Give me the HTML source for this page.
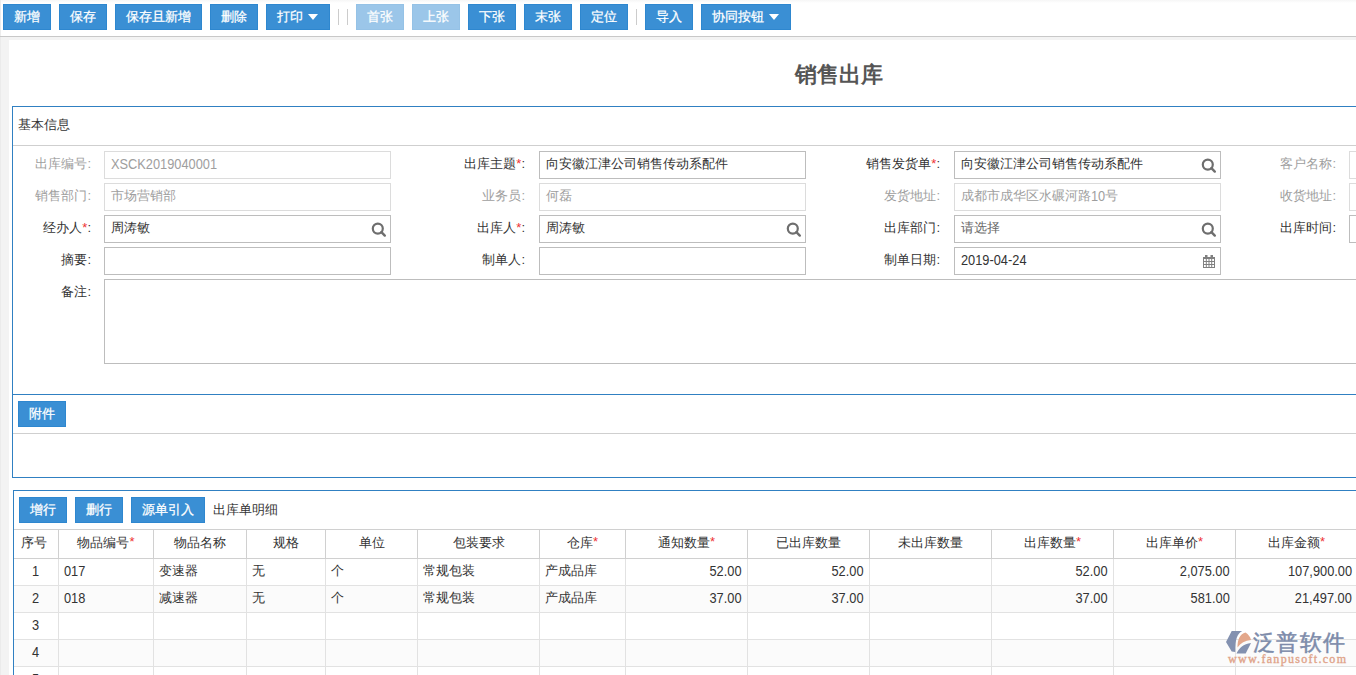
<!DOCTYPE html>
<html><head><meta charset="utf-8">
<style>
*{box-sizing:border-box;margin:0;padding:0}
html,body{width:1356px;height:675px;overflow:hidden;background:#f3f3f3;font-family:"Liberation Sans",sans-serif;font-size:13px;color:#333}
.abs{position:absolute}
#tb{position:absolute;left:0;top:0;width:1356px;height:37px;background:linear-gradient(#f6f6f6,#fff 3px);border-bottom:1px solid #c8c8c8;box-shadow:inset 1px 0 #ececec}
.btn{position:absolute;top:4px;height:26px;background:#3a8fd4;border:1px solid #2e87cf;color:#fff;-webkit-text-stroke:0.25px #fff;font-size:13px;line-height:24px;text-align:center;white-space:nowrap}
.btn.dis{opacity:.5}
.sep{position:absolute;top:9px;width:1px;height:16px;background:#ccc}
.caret{display:inline-block;width:0;height:0;border-left:5px solid transparent;border-right:5px solid transparent;border-top:6px solid #fff;vertical-align:middle;margin-left:5px;position:relative;top:-1px}
#panel{position:absolute;left:9px;top:40px;width:1660px;height:700px;background:#fff}
.fs{position:absolute;border:1px solid #3080c2;background:#fff}
.lbl{position:absolute;text-align:right;white-space:nowrap;line-height:26px;height:27px}
.lbl.g{color:#9e9e9e}
.req{color:#e33}
.cell .req{position:relative;top:-1px}
.inp{position:absolute;height:28px;border:1px solid #bdbdbd;background:#fff;line-height:24px;padding-left:6px;white-space:nowrap;overflow:hidden}
.inp.d{border-color:#dcdcdc;color:#9e9e9e}
.ic{position:absolute;right:3px;top:6px}
.n{display:inline-block;transform:translateY(1px) scale(0.985,1.1);transform-origin:0 62%}
.cell.r .n{transform-origin:100% 62%}
.inp .n{transform:translateY(1px) scale(0.985,1.1)}
.hl{position:absolute;height:1px;background:#cfcfcf}
.cell{position:absolute;white-space:nowrap;overflow:hidden;padding:0 6px}
.cell.c{text-align:center}.cell.r{text-align:right;padding-right:5px}.cell.l{text-align:left;padding-left:5px}
</style></head><body>
<div id="tb">
  <div class="btn" style="left:3px;width:48px">新增</div>
  <div class="btn" style="left:59px;width:48px">保存</div>
  <div class="btn" style="left:115px;width:87px">保存且新增</div>
  <div class="btn" style="left:210px;width:48px">删除</div>
  <div class="btn" style="left:266px;width:64px;padding-right:2px">打印<span class="caret"></span></div>
  <div class="sep" style="left:338px"></div>
  <div class="sep" style="left:347px"></div>
  <div class="btn dis" style="left:356px;width:48px">首张</div>
  <div class="btn dis" style="left:412px;width:48px">上张</div>
  <div class="btn" style="left:468px;width:48px">下张</div>
  <div class="btn" style="left:524px;width:48px">末张</div>
  <div class="btn" style="left:580px;width:48px">定位</div>
  <div class="sep" style="left:636px"></div>
  <div class="btn" style="left:645px;width:48px">导入</div>
  <div class="btn" style="left:701px;width:90px;padding-right:2px">协同按钮<span class="caret"></span></div>
</div>
<div id="panel"></div>
<div class="abs" style="left:0;top:37px;width:1px;height:638px;background:#ebebeb"></div>
<div class="abs" style="left:795px;top:60px;font-size:22px;font-weight:bold;color:#555;line-height:30px">销售出库</div>

<!-- fieldset 1 -->
<div class="fs" style="left:12px;top:106px;width:1700px;height:372px">
</div>
<div class="abs" style="left:18px;top:115px;line-height:20px">基本信息</div>
<div class="hl" style="left:13px;top:145px;width:1343px"></div>

<div id="form">
<div class="lbl g" style="left:-109px;top:151px;width:200px">出库编号:</div>
<div class="inp d" style="left:104px;top:151px;width:287px"><span class="n">XSCK2019040001</span></div>
<div class="lbl" style="left:325px;top:151px;width:200px">出库主题<span class="req">*</span>:</div>
<div class="inp" style="left:539px;top:151px;width:267px">向安徽江津公司销售传动系配件</div>
<div class="lbl" style="left:740px;top:151px;width:200px">销售发货单<span class="req">*</span>:</div>
<div class="inp" style="left:954px;top:151px;width:267px">向安徽江津公司销售传动系配件<svg class="ic" width="16" height="16" viewBox="0 0 16 16"><circle cx="6.8" cy="6.6" r="5" fill="none" stroke="#6e6e6e" stroke-width="2.2"/><line x1="10.4" y1="10.2" x2="13.8" y2="13.6" stroke="#6e6e6e" stroke-width="2.4" stroke-linecap="round"/></svg></div>
<div class="lbl g" style="left:1136px;top:151px;width:200px">客户名称:</div>
<div class="inp d" style="left:1349px;top:151px;width:300px"></div>
<div class="lbl g" style="left:-109px;top:183px;width:200px">销售部门:</div>
<div class="inp d" style="left:104px;top:183px;width:287px">市场营销部</div>
<div class="lbl g" style="left:325px;top:183px;width:200px">业务员:</div>
<div class="inp d" style="left:539px;top:183px;width:267px">何磊</div>
<div class="lbl g" style="left:740px;top:183px;width:200px">发货地址:</div>
<div class="inp d" style="left:954px;top:183px;width:267px">成都市成华区水碾河路<span class="n">10</span>号</div>
<div class="lbl g" style="left:1136px;top:183px;width:200px">收货地址:</div>
<div class="inp d" style="left:1349px;top:183px;width:300px"></div>
<div class="lbl" style="left:-109px;top:215px;width:200px">经办人<span class="req">*</span>:</div>
<div class="inp" style="left:104px;top:215px;width:287px">周涛敏<svg class="ic" width="16" height="16" viewBox="0 0 16 16"><circle cx="6.8" cy="6.6" r="5" fill="none" stroke="#6e6e6e" stroke-width="2.2"/><line x1="10.4" y1="10.2" x2="13.8" y2="13.6" stroke="#6e6e6e" stroke-width="2.4" stroke-linecap="round"/></svg></div>
<div class="lbl" style="left:325px;top:215px;width:200px">出库人<span class="req">*</span>:</div>
<div class="inp" style="left:539px;top:215px;width:267px">周涛敏<svg class="ic" width="16" height="16" viewBox="0 0 16 16"><circle cx="6.8" cy="6.6" r="5" fill="none" stroke="#6e6e6e" stroke-width="2.2"/><line x1="10.4" y1="10.2" x2="13.8" y2="13.6" stroke="#6e6e6e" stroke-width="2.4" stroke-linecap="round"/></svg></div>
<div class="lbl" style="left:740px;top:215px;width:200px">出库部门:</div>
<div class="inp" style="left:954px;top:215px;width:267px;color:#666">请选择<svg class="ic" width="16" height="16" viewBox="0 0 16 16"><circle cx="6.8" cy="6.6" r="5" fill="none" stroke="#6e6e6e" stroke-width="2.2"/><line x1="10.4" y1="10.2" x2="13.8" y2="13.6" stroke="#6e6e6e" stroke-width="2.4" stroke-linecap="round"/></svg></div>
<div class="lbl" style="left:1136px;top:215px;width:200px">出库时间:</div>
<div class="inp" style="left:1349px;top:215px;width:300px"></div>
<div class="lbl" style="left:-109px;top:247px;width:200px">摘要:</div>
<div class="inp" style="left:104px;top:247px;width:287px"></div>
<div class="lbl" style="left:325px;top:247px;width:200px">制单人:</div>
<div class="inp" style="left:539px;top:247px;width:267px"></div>
<div class="lbl" style="left:740px;top:247px;width:200px">制单日期:</div>
<div class="inp" style="left:954px;top:247px;width:267px"><span class="n">2019-04-24</span><svg class="ic" width="16" height="16" viewBox="0 0 16 16"><g fill="none" stroke="#808080" stroke-width="1"><rect x="2.5" y="3.5" width="11" height="10"/><line x1="2.5" y1="7.5" x2="13.5" y2="7.5"/><line x1="2.5" y1="10.5" x2="13.5" y2="10.5"/><line x1="5.3" y1="4" x2="5.3" y2="13.5"/><line x1="8" y1="4" x2="8" y2="13.5"/><line x1="10.7" y1="4" x2="10.7" y2="13.5"/></g><rect x="2" y="3" width="12" height="2" fill="#808080"/><rect x="4" y="1" width="2.5" height="3" fill="#808080"/><rect x="9.5" y="1" width="2.5" height="3" fill="#808080"/></svg></div>
<div class="lbl" style="left:-109px;top:279px;width:200px">备注:</div>
<div class="inp" style="left:104px;top:279px;width:1400px;height:85px"></div>
</div>

<div class="abs" style="left:13px;top:394px;width:1343px;height:1px;background:#3080c2"></div>
<div class="btn" style="left:18px;top:401px;width:48px">附件</div>
<div class="hl" style="left:13px;top:433px;width:1343px"></div>

<!-- fieldset 2 -->
<div class="fs" style="left:13px;top:490px;width:1700px;height:300px"></div>
<div class="btn" style="left:19px;top:497px;width:48px">增行</div>
<div class="btn" style="left:75px;top:497px;width:48px">删行</div>
<div class="btn" style="left:131px;top:497px;width:74px">源单引入</div>
<div class="abs" style="left:213px;top:497px;line-height:26px">出库单明细</div>
<div id="grid">
<div class="abs" style="left:14px;top:586px;width:1342px;height:26px;background:#fbfbfb"></div>
<div class="abs" style="left:14px;top:640px;width:1342px;height:26px;background:#fbfbfb"></div>
<div class="abs" style="left:14px;top:529px;width:1342px;height:1px;background:#d0d0d0"></div>
<div class="abs" style="left:14px;top:558px;width:1342px;height:1px;background:#d0d0d0"></div>
<div class="abs" style="left:14px;top:585px;width:1342px;height:1px;background:#e2e2e2"></div>
<div class="abs" style="left:14px;top:612px;width:1342px;height:1px;background:#e2e2e2"></div>
<div class="abs" style="left:14px;top:639px;width:1342px;height:1px;background:#e2e2e2"></div>
<div class="abs" style="left:14px;top:666px;width:1342px;height:1px;background:#e2e2e2"></div>
<div class="abs" style="left:14px;top:693px;width:1342px;height:1px;background:#e2e2e2"></div>
<div class="abs" style="left:58px;top:530px;width:1px;height:28px;background:#d0d0d0"></div>
<div class="abs" style="left:58px;top:559px;width:1px;height:120px;background:#e2e2e2"></div>
<div class="abs" style="left:153px;top:530px;width:1px;height:28px;background:#d0d0d0"></div>
<div class="abs" style="left:153px;top:559px;width:1px;height:120px;background:#e2e2e2"></div>
<div class="abs" style="left:246px;top:530px;width:1px;height:28px;background:#d0d0d0"></div>
<div class="abs" style="left:246px;top:559px;width:1px;height:120px;background:#e2e2e2"></div>
<div class="abs" style="left:325px;top:530px;width:1px;height:28px;background:#d0d0d0"></div>
<div class="abs" style="left:325px;top:559px;width:1px;height:120px;background:#e2e2e2"></div>
<div class="abs" style="left:417px;top:530px;width:1px;height:28px;background:#d0d0d0"></div>
<div class="abs" style="left:417px;top:559px;width:1px;height:120px;background:#e2e2e2"></div>
<div class="abs" style="left:539px;top:530px;width:1px;height:28px;background:#d0d0d0"></div>
<div class="abs" style="left:539px;top:559px;width:1px;height:120px;background:#e2e2e2"></div>
<div class="abs" style="left:625px;top:530px;width:1px;height:28px;background:#d0d0d0"></div>
<div class="abs" style="left:625px;top:559px;width:1px;height:120px;background:#e2e2e2"></div>
<div class="abs" style="left:747px;top:530px;width:1px;height:28px;background:#d0d0d0"></div>
<div class="abs" style="left:747px;top:559px;width:1px;height:120px;background:#e2e2e2"></div>
<div class="abs" style="left:869px;top:530px;width:1px;height:28px;background:#d0d0d0"></div>
<div class="abs" style="left:869px;top:559px;width:1px;height:120px;background:#e2e2e2"></div>
<div class="abs" style="left:991px;top:530px;width:1px;height:28px;background:#d0d0d0"></div>
<div class="abs" style="left:991px;top:559px;width:1px;height:120px;background:#e2e2e2"></div>
<div class="abs" style="left:1113px;top:530px;width:1px;height:28px;background:#d0d0d0"></div>
<div class="abs" style="left:1113px;top:559px;width:1px;height:120px;background:#e2e2e2"></div>
<div class="abs" style="left:1235px;top:530px;width:1px;height:28px;background:#d0d0d0"></div>
<div class="abs" style="left:1235px;top:559px;width:1px;height:120px;background:#e2e2e2"></div>
<div class="cell c" style="left:14px;top:530px;width:44px;height:28px;line-height:26px;padding:0 10px 0 6px">序号</div>
<div class="cell c" style="left:59px;top:530px;width:94px;height:28px;line-height:26px">物品编号<span class=req>*</span></div>
<div class="cell c" style="left:154px;top:530px;width:92px;height:28px;line-height:26px">物品名称</div>
<div class="cell c" style="left:247px;top:530px;width:78px;height:28px;line-height:26px">规格</div>
<div class="cell c" style="left:326px;top:530px;width:91px;height:28px;line-height:26px">单位</div>
<div class="cell c" style="left:418px;top:530px;width:121px;height:28px;line-height:26px">包装要求</div>
<div class="cell c" style="left:540px;top:530px;width:85px;height:28px;line-height:26px">仓库<span class=req>*</span></div>
<div class="cell c" style="left:626px;top:530px;width:121px;height:28px;line-height:26px">通知数量<span class=req>*</span></div>
<div class="cell c" style="left:748px;top:530px;width:121px;height:28px;line-height:26px">已出库数量</div>
<div class="cell c" style="left:870px;top:530px;width:121px;height:28px;line-height:26px">未出库数量</div>
<div class="cell c" style="left:992px;top:530px;width:121px;height:28px;line-height:26px">出库数量<span class=req>*</span></div>
<div class="cell c" style="left:1114px;top:530px;width:121px;height:28px;line-height:26px">出库单价<span class=req>*</span></div>
<div class="cell c" style="left:1236px;top:530px;width:121px;height:28px;line-height:26px">出库金额<span class=req>*</span></div>
<div class="cell c" style="left:14px;top:559px;width:44px;height:26px;line-height:24px"><span class="n">1</span></div>
<div class="cell l" style="left:59px;top:559px;width:94px;height:26px;line-height:24px"><span class="n">017</span></div>
<div class="cell l" style="left:154px;top:559px;width:92px;height:26px;line-height:24px">变速器</div>
<div class="cell l" style="left:247px;top:559px;width:78px;height:26px;line-height:24px">无</div>
<div class="cell l" style="left:326px;top:559px;width:91px;height:26px;line-height:24px">个</div>
<div class="cell l" style="left:418px;top:559px;width:121px;height:26px;line-height:24px">常规包装</div>
<div class="cell l" style="left:540px;top:559px;width:85px;height:26px;line-height:24px">产成品库</div>
<div class="cell r" style="left:626px;top:559px;width:121px;height:26px;line-height:24px"><span class="n">52.00</span></div>
<div class="cell r" style="left:748px;top:559px;width:121px;height:26px;line-height:24px"><span class="n">52.00</span></div>
<div class="cell r" style="left:992px;top:559px;width:121px;height:26px;line-height:24px"><span class="n">52.00</span></div>
<div class="cell r" style="left:1114px;top:559px;width:121px;height:26px;line-height:24px"><span class="n">2,075.00</span></div>
<div class="cell r" style="left:1236px;top:559px;width:121px;height:26px;line-height:24px"><span class="n">107,900.00</span></div>
<div class="cell c" style="left:14px;top:586px;width:44px;height:26px;line-height:24px"><span class="n">2</span></div>
<div class="cell l" style="left:59px;top:586px;width:94px;height:26px;line-height:24px"><span class="n">018</span></div>
<div class="cell l" style="left:154px;top:586px;width:92px;height:26px;line-height:24px">减速器</div>
<div class="cell l" style="left:247px;top:586px;width:78px;height:26px;line-height:24px">无</div>
<div class="cell l" style="left:326px;top:586px;width:91px;height:26px;line-height:24px">个</div>
<div class="cell l" style="left:418px;top:586px;width:121px;height:26px;line-height:24px">常规包装</div>
<div class="cell l" style="left:540px;top:586px;width:85px;height:26px;line-height:24px">产成品库</div>
<div class="cell r" style="left:626px;top:586px;width:121px;height:26px;line-height:24px"><span class="n">37.00</span></div>
<div class="cell r" style="left:748px;top:586px;width:121px;height:26px;line-height:24px"><span class="n">37.00</span></div>
<div class="cell r" style="left:992px;top:586px;width:121px;height:26px;line-height:24px"><span class="n">37.00</span></div>
<div class="cell r" style="left:1114px;top:586px;width:121px;height:26px;line-height:24px"><span class="n">581.00</span></div>
<div class="cell r" style="left:1236px;top:586px;width:121px;height:26px;line-height:24px"><span class="n">21,497.00</span></div>
<div class="cell c" style="left:14px;top:613px;width:44px;height:26px;line-height:24px"><span class="n">3</span></div>
<div class="cell c" style="left:14px;top:640px;width:44px;height:26px;line-height:24px"><span class="n">4</span></div>
<div class="cell c" style="left:14px;top:667px;width:44px;height:26px;line-height:24px"><span class="n">5</span></div>
</div>
<div id="logo" class="abs" style="left:1224px;top:629px;width:132px;height:46px">
<svg class="abs" style="left:0;top:0" width="30" height="27" viewBox="0 0 30 27">
<path d="M7.7 2 L18.3 2 C13.5 4.5 11 10 11.3 23 L7.7 22.5 L2 13 Z" fill="#8391b0"/>
<path d="M13.5 18.5 C13.5 10 16 5 21.5 3.5 C24.5 5.5 26.5 8 27 11 C21 11.5 16.5 14 13.5 18.5 Z" fill="#e3a78b"/>
<path d="M12.5 24.5 C15 19 19.5 15 27 14 L21.7 24.5 Z" fill="#8391b0"/>
</svg>
<div class="abs" style="left:29px;top:-1px;font-size:22px;letter-spacing:1.3px;line-height:30px;color:#7d8baa;-webkit-text-stroke:0.5px #7d8baa;white-space:nowrap">泛普软件</div>
<div class="abs" style="left:4px;top:22px;font-family:'Liberation Serif',serif;font-size:12px;letter-spacing:1.3px;line-height:16px;color:#e0a389;-webkit-text-stroke:0.35px #e0a389;white-space:nowrap">www.fanpusoft.com</div>
</div>
</body></html>
